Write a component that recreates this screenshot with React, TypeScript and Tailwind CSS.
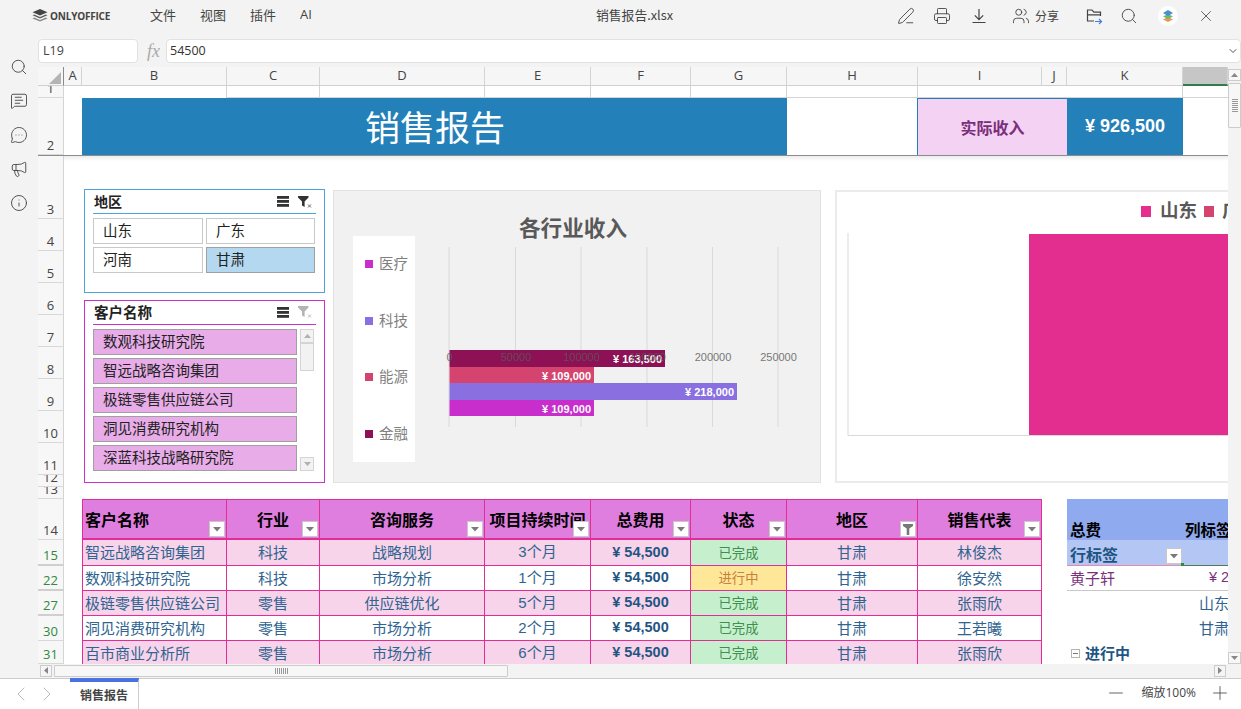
import React from "react";
import { Search, MessageSquareText, MessageCircleMore, Megaphone, Info, Printer, PenLine, Users, ChevronLeft, ChevronRight, ChevronDown, X, Minus, Plus } from "lucide-react";

const sans = "font-['Liberation_Sans','Noto_Sans_CJK_SC',sans-serif]";
const cjk = "font-['Noto_Sans_CJK_SC',sans-serif]";
const ui = "font-['Open_Sans','Noto_Sans_CJK_SC',sans-serif]";

const Caret = () => (
  <svg width="8" height="5" viewBox="0 0 8 5"><path d="M0 0h8L4 4.5z" fill="#7a7a7a" /></svg>
);

function FilterBtn({ funnel }: { funnel?: boolean }) {
  return (
    <span className="absolute right-[1px] bottom-[1px] w-[16px] h-[16px] bg-white border border-[#c8c8c8] flex items-center justify-center">
      {funnel ? (
        <svg width="10" height="11" viewBox="0 0 10 11"><path d="M0 0h10v2L6.3 4.5V11H3.7V4.5L0 2z" fill="#777777" /></svg>
      ) : (
        <Caret />
      )}
    </span>
  );
}

function RowHead({ n, green, thick }: { n: number | string; green?: boolean; thick?: boolean }) {
  return (
    <div
      className={
        "bg-[#f6f7f6] border-r border-r-[#d4d4d4] flex items-end justify-center overflow-hidden text-[13px] leading-[18px] " +
        ui +
        " " +
        (green ? "text-[#2f8a3a] " : "text-[#444444] ") +
        (thick ? "border-b-2 border-b-[#cfcfcf]" : "border-b border-b-[#d8d8d8]")
      }
    >
      {n}
    </div>
  );
}

function ColHead({ t, sel }: { t: string; sel?: boolean }) {
  return (
    <div
      className={
        "flex items-center justify-center text-[13px] text-[#444444] border-r border-r-[#d4d4d4] " +
        ui +
        " " +
        (sel ? "bg-[#c6c6c6] border-b-2 border-b-[#2f7d4a]" : "bg-[#f6f6f6] border-b border-b-[#d0d0d0]")
      }
    >
      {t}
    </div>
  );
}

const Grid1 = ({ span }: { span: string }) => <div className={span + " bg-white border-r border-r-[#d4d4d4] border-b border-b-[#d4d4d4]"} />;

const headBase =
  "relative bg-[#df7edf] border-t border-r border-b-2 border-[#e22d96] flex items-center text-[16px] font-bold text-black whitespace-nowrap overflow-hidden " + cjk;

function Head({ t, left, first, funnel }: { t: string; left?: boolean; first?: boolean; funnel?: boolean }) {
  return (
    <div className={headBase + (left ? " justify-start pl-[2px]" : " justify-center") + (first ? " border-l" : "")}>
      <span className="pb-[1px]">{t}</span>
      <FilterBtn funnel={funnel} />
    </div>
  );
}

const rows = [
  { n: 15, thick: true, c: ["智远战略咨询集团", "科技", "战略规划", "3个月", "已完成", "林俊杰"], pink: true, h: "h-[26px]", extra: "hang" },
  { n: 22, thick: true, c: ["数观科技研究院", "科技", "市场分析", "1个月", "进行中", "徐安然"], pink: false, h: "h-[25px]", extra: "p1" },
  { n: 27, thick: true, c: ["极链零售供应链公司", "零售", "供应链优化", "5个月", "已完成", "张雨欣"], pink: true, h: "h-[25px]", extra: "p2" },
  { n: 30, thick: false, c: ["洞见消费研究机构", "零售", "市场分析", "2个月", "已完成", "王若曦"], pink: false, h: "h-[25px]", extra: "p3" },
  { n: 31, thick: false, c: ["百市商业分析所", "零售", "市场分析", "6个月", "已完成", "张雨欣"], pink: true, h: "h-[25px]", extra: "p4" },
];

const bodyCell = "border-r border-b border-[#e22d96] flex items-center whitespace-nowrap overflow-hidden ";
const bodyText = "text-[15px] text-[#2f6490] ";

function PivotCells({ k }: { k: string }) {
  if (k === "hang")
    return (
      <>
        <div className={"relative bg-[#b4c6f4] border-b border-b-[#e58ab0] flex items-center pl-[3px] pt-[2px] text-[16px] font-bold text-[#1f5582] " + cjk}>
          行标签
          <FilterBtn />
        </div>
        <div className="relative bg-[#b4c6f4] border-b border-b-[#4c7a5c]">
          <span className="absolute left-[-2px] bottom-[-1px] w-[3px] h-[3px] bg-[#2f8a3a]" />
        </div>
      </>
    );
  if (k === "p1")
    return (
      <>
        <div className={"bg-white border-b border-b-[#c8c8c8] flex items-center pl-[3px] text-[15px] text-[#7a2f7a] " + cjk}>黄子轩</div>
        <div className={"bg-white border-b border-b-[#c8c8c8] flex items-center pl-[26px] text-[14.5px] text-[#7a2f7a] whitespace-nowrap overflow-hidden " + sans}>¥ 218,000</div>
      </>
    );
  if (k === "p2" || k === "p3")
    return (
      <>
        <div className="bg-white" />
        <div className={"bg-white flex items-center pl-[16px] text-[15px] text-[#2f6490] whitespace-nowrap overflow-hidden " + cjk}>{k === "p2" ? "山东" : "甘肃"}</div>
      </>
    );
  return (
    <>
      <div className={"bg-white flex items-center pl-[4px] gap-[5px] text-[15px] font-bold text-[#1f5582] h-[25px] " + cjk}>
        <span className="w-[9px] h-[9px] border border-[#b5b5b5] flex items-center justify-center">
          <span className="w-[5px] h-[1px] bg-[#777777]" />
        </span>
        进行中
      </div>
      <div className="bg-white" />
    </>
  );
}

function SlicerIcons({ dim }: { dim?: boolean }) {
  return (
    <div className="ml-auto mr-[4px] flex items-center gap-[9px]">
      <svg width="12" height="11" viewBox="0 0 12 11">
        <rect x="0" y="0" width="12" height="2.8" fill="#333" />
        <rect x="0" y="4" width="12" height="2.8" fill="#333" />
        <rect x="0" y="8" width="12" height="2.8" fill="#333" />
      </svg>
      <svg width="14" height="12" viewBox="0 0 14 12">
        <path d="M0 0h10.5v1.4L6.6 5.4V11l-2.6-1.6V5.4L0 1.4z" fill={dim ? "#b4b4b4" : "#333"} />
        <path d="M10 8.5l3 3m0-3l-3 3" stroke={dim ? "#b4b4b4" : "#555"} strokeWidth="0.9" />
      </svg>
    </div>
  );
}

function SliceBtn({ t, sel, pink }: { t: string; sel?: boolean; pink?: boolean }) {
  return (
    <div
      className={
        "h-[26px] flex items-center pl-[9px] pb-[2px] text-[14.5px] text-[#222222] whitespace-nowrap border " +
        (pink ? "bg-[#e8ace8] border-[#a0a0a0]" : sel ? "bg-[#b3d8f0] border-[#a0a0a0]" : "bg-white border-[#c8c8c8]")
      }
    >
      {t}
    </div>
  );
}

function Chart1() {
  const f = "font-['Liberation_Sans','Noto_Sans_CJK_SC',sans-serif]";
  const ticks = [
    [449, "0"],
    [515.5, "50000"],
    [581, "100000"],
    [647, "150000"],
    [712.5, "200000"],
    [778, "250000"],
  ] as const;
  const legend = [
    ["医疗", "#c72ecb", 264],
    ["科技", "#8a6fe0", 321],
    ["能源", "#d4446f", 377],
    ["金融", "#8e1155", 434],
  ] as const;
  const bars = [
    [350, 17, 665, "#8e1155", "¥ 163,500", 662],
    [367, 16, 594, "#d4446f", "¥ 109,000", 591],
    [383, 17, 737, "#8a6fe0", "¥ 218,000", 734],
    [400, 16, 594, "#c72ecb", "¥ 109,000", 591],
  ] as const;
  return (
    <svg className="block" width="486" height="291" viewBox="334 191 486 291">
      <text x="573" y="235.5" textAnchor="middle" fontSize="21.6" fontWeight="700" fill="#595959" className={cjk}>各行业收入</text>
      <rect x="353" y="236" width="62" height="226" fill="#ffffff" />
      {legend.map(([t, c, y]) => (
        <g key={t}>
          <rect x="365" y={y - 4} width="8" height="8" fill={c} />
          <text x="379" y={y + 5} fontSize="14.5" fill="#7f7f7f" className={cjk}>{t}</text>
        </g>
      ))}
      {ticks.map(([x]) => (
        <line key={x} x1={x} x2={x} y1="247" y2="427" stroke="#d9d9d9" strokeWidth="1" />
      ))}
      {bars.map(([y, h, x2, c, t, tx]) => (
        <g key={y}>
          <rect x="449.5" y={y} width={x2 - 449.5} height={h} fill={c} />
          <text x={tx} y={y + 12.5} textAnchor="end" fontSize="11" fontWeight="700" fill="#ffffff" className={f}>{t}</text>
        </g>
      ))}
      {ticks.map(([x, t]) => (
        <text key={t} x={x + 0.5} y="361" textAnchor="middle" fontSize="11" fill="#595959" opacity="0.8" className={f}>{t}</text>
      ))}
    </svg>
  );
}

function Chart2() {
  return (
    <svg className="block" width="420" height="291" viewBox="837 191 420 291">
      <rect x="1141" y="205" width="10" height="11" fill="#e62e8f" />
      <text x="1160" y="216" fontSize="18.5" fontWeight="700" fill="#595959" className={cjk}>山东</text>
      <rect x="1204" y="205" width="10" height="11" fill="#d4446f" />
      <text x="1222" y="216" fontSize="18.5" fontWeight="700" fill="#595959" className={cjk}>广东</text>
      <line x1="848" x2="848" y1="232" y2="434.5" stroke="#d9d9d9" />
      <line x1="848" x2="1257" y1="434.5" y2="434.5" stroke="#d9d9d9" />
      <rect x="1029" y="233" width="228" height="201" fill="#e32d8f" />
    </svg>
  );
}

const Logo = () => (
  <svg width="16" height="15" viewBox="0 0 16 15">
    <path d="M8 0l7.5 3.2L8 6.4.5 3.2z" fill="#444" />
    <path d="M2.2 5.4L8 7.9l5.8-2.5 1.7.8L8 9.4.5 6.2z" fill="#5c5c5c" />
    <path d="M2.2 8.6L8 11.1l5.8-2.5 1.7.8L8 12.6.5 9.4z" fill="#8a8a8a" />
  </svg>
);

export default function App() {
  const ic = { size: 18, strokeWidth: 1.2, color: "#444444" };
  return (
    <div className={"w-[1241px] h-[709px] bg-[#f3f3f3] overflow-hidden flex flex-col " + cjk}>
      {/* title bar */}
      <div className="h-[39px] shrink-0 relative flex items-start">
        <div className="flex items-center h-[33px] pl-[32px] w-[150px] gap-[2px]">
          <Logo />
          <span className="text-[10px] font-bold text-[#444444] tracking-[-0.2px] font-['Open_Sans',sans-serif]">ONLYOFFICE</span>
        </div>
        <div className="flex items-center h-[30px] text-[13px] text-[#444444]">
          <span className="w-[50px]">文件</span>
          <span className="w-[50px]">视图</span>
          <span className="w-[50px]">插件</span>
          <span className={ui}>AI</span>
        </div>
        <div className="absolute left-[596px] top-0 h-[30px] flex items-center text-[12.8px] text-[#444444]">销售报告.xlsx</div>
        <div className="ml-auto flex items-center h-[31px] pr-[26px]">
          <PenLine {...ic} />
          <Printer {...ic} className="ml-[18px]" />
          <svg className="ml-[19px]" width="18" height="18" viewBox="0 0 18 18" fill="none" stroke="#444444" strokeWidth="1.2">
            <path d="M9 2v10.5M4.8 8.4L9 12.6l4.2-4.2M2.5 15.5h13" />
          </svg>
          <Users {...ic} className="ml-[24px]" />
          <span className="ml-[5px] text-[12px] text-[#444444]">分享</span>
          <svg className="ml-[26px]" width="18" height="18" viewBox="0 0 18 18" fill="none" strokeWidth="1.2">
            <path d="M9 14H2.5V3h4.5l2 2.2h6.5V9M2.5 7.8h13" stroke="#444444" />
            <path d="M10 14.5h6.5M14 12l2.5 2.5L14 17" stroke="#3f7fe0" />
          </svg>
          <Search {...ic} className="ml-[17px]" />
          <span className="ml-[20px] w-[20px] h-[20px] rounded-full bg-white flex items-center justify-center">
            <svg width="12" height="12" viewBox="0 0 12 12">
              <path d="M6 7l5 2.4L6 12 1 9.4z" fill="#e59a52" />
              <path d="M6 4l5 2.4L6 9 1 6.4z" fill="#72b872" />
              <path d="M6 0l5 3L6 6 1 3z" fill="#4a8fd6" />
            </svg>
          </span>
          <X size={18} strokeWidth={1.1} color="#444444" className="ml-[19px]" />
        </div>
      </div>

      <div className="flex-1 flex min-h-0">
        {/* left rail */}
        <div className="w-[38px] shrink-0 flex flex-col items-center pt-[19px] gap-[16px]">
          <Search {...ic} />
          <MessageSquareText {...ic} />
          <MessageCircleMore {...ic} />
          <Megaphone {...ic} />
          <Info {...ic} />
        </div>

        <div className="w-[1203px] flex flex-col">
          {/* formula bar */}
          <div className="h-[24px] flex shrink-0 mb-[4px]">
            <div className={"w-[100px] bg-white rounded-[4px] border border-[#e2e2e2] flex items-center pl-[4px] text-[12.5px] text-[#444444] " + ui}>L19</div>
            <div className="w-[28px] flex items-center justify-center pl-[3px] font-['Liberation_Serif',serif] italic text-[18px] text-[#aaaaaa]">fx</div>
            <div className={"flex-1 bg-white rounded-[4px] border border-[#e2e2e2] flex items-center pl-[3px] text-[12.5px] text-[#333333] " + ui}>
              54500
              <ChevronDown size={12} strokeWidth={2} color="#555555" className="ml-auto mr-[1px]" />
            </div>
          </div>

          <div className="flex h-[610px]">
            <div className="w-[1190px] flex flex-col">
              {/* sheet */}
              <div className="relative h-[597px] bg-white overflow-hidden grid grid-cols-[26px_18px_145px_93px_165px_106px_100px_96px_131px_124px_25px_116px_45px] grid-rows-[19px_12px_57px_64px_32px_32px_32px_32px_32px_32px_32px_32px_12px_12px_41px_26px_25px_25px_25px_23px]">
                {/* column letters */}
                <div className="bg-[#f6f6f6] border-r border-r-[#8a8a8a] border-b border-b-[#d0d0d0] flex items-end justify-end">
                  <svg width="12" height="12" viewBox="0 0 12 12" className="mb-[1px] mr-[2px]"><path d="M12 0v12H0z" fill="#b4b4b4" /></svg>
                </div>
                {["A", "B", "C", "D", "E", "F", "G", "H", "I", "J", "K"].map((c) => (
                  <ColHead key={c} t={c} />
                ))}
                <ColHead t="" sel />

                {/* row 1 */}
                <RowHead n={1} />
                <div className="col-span-2 bg-white border-r border-r-[#d4d4d4]" />
                <Grid1 span="" />
                <Grid1 span="" />
                <Grid1 span="" />
                <Grid1 span="" />
                <Grid1 span="" />
                <Grid1 span="" />
                <Grid1 span="col-span-3" />
                <div className="bg-white border-b border-b-[#d4d4d4]" />

                {/* row 2 */}
                <RowHead n={2} />
                <div className="bg-white" />
                <div className="col-span-6 bg-[#2480b9] flex items-center justify-center text-[35px] text-white pb-[2px] leading-none">
                  <span className="pl-[1px]">销售报告</span>
                </div>
                <div className="bg-white" />
                <div className="col-span-2 -ml-[1px] bg-[#f4d2f4] border-t border-l border-[#2480b9] flex items-center justify-center text-[16px] font-bold text-[#7a2f7a]">实际收入</div>
                <div className={"bg-[#2480b9] flex items-center justify-center text-[18px] font-bold text-white " + sans}>¥ 926,500</div>
                <div className="bg-white" />

                {/* rows 3-13 */}
                {[3, 4, 5, 6, 7, 8, 9, 10, 11].map((n) => (
                  <React.Fragment key={n}>
                    <RowHead n={n} />
                    <div className="col-span-12 bg-white" />
                  </React.Fragment>
                ))}
                <RowHead n={12} />
                <div className="col-span-12 bg-white" />
                <RowHead n={13} />
                <div className="col-span-12 bg-white" />

                {/* row 14 */}
                <RowHead n={14} />
                <div className="bg-white" />
                <Head t="客户名称" left first />
                <Head t="行业" />
                <Head t="咨询服务" />
                <Head t="项目持续时间" />
                <Head t="总费用" />
                <Head t="状态" />
                <Head t="地区" funnel />
                <Head t="销售代表" />
                <div className="bg-white" />
                <div className={"bg-[#8faaee] flex items-end pl-[3px] pb-[1px] text-[15.5px] font-bold text-black leading-[20px] " + cjk}>总费</div>
                <div className={"bg-[#8faaee] flex items-end pl-[2px] pb-[1px] text-[15.5px] font-bold text-black whitespace-nowrap overflow-hidden leading-[20px] " + cjk}>列标签</div>

                {/* table body */}
                {rows.map((r) => {
                  const bg = r.pink ? "bg-[#f7d4ea] " : "bg-white ";
                  return (
                    <React.Fragment key={r.n}>
                      <RowHead n={r.n} green thick={r.thick} />
                      <div className="bg-white" />
                      <div className={bodyCell + bodyText + bg + "border-l pl-[2px] " + r.h}>{r.c[0]}</div>
                      <div className={bodyCell + bodyText + bg + "justify-center " + r.h}>{r.c[1]}</div>
                      <div className={bodyCell + bodyText + bg + "justify-center " + r.h}>{r.c[2]}</div>
                      <div className={bodyCell + bodyText + bg + "justify-center " + sans + " " + r.h}>{r.c[3]}</div>
                      <div className={bodyCell + bg + "justify-center font-bold text-[14.5px] text-[#1f5582] " + sans + " " + r.h}>¥ 54,500</div>
                      <div
                        className={
                          bodyCell +
                          "justify-center text-[13.3px] " +
                          (r.c[4] === "进行中" ? "bg-[#fee799] text-[#c9803a] " : "bg-[#c6efce] text-[#3f8f4f] ") +
                          r.h
                        }
                      >
                        {r.c[4]}
                      </div>
                      <div className={bodyCell + bodyText + bg + "justify-center " + r.h}>甘肃</div>
                      <div className={bodyCell + bodyText + bg + "justify-center " + r.h}>{r.c[5]}</div>
                      <div className="bg-white" />
                      <PivotCells k={r.extra} />
                    </React.Fragment>
                  );
                })}

                {/* frozen pane line */}
                <div className="absolute left-0 right-0 top-[88px] h-[1px] bg-[#8c8c8c]" />
                <div className="absolute left-[26px] right-0 top-[89px] h-[5px] bg-gradient-to-b from-[#ececec] to-transparent" />

                {/* slicer: region */}
                <div className="absolute left-[46px] top-[122px] w-[241px] h-[104px] bg-white border border-[#4ba5dc] px-[8px]">
                  <div className="h-[24px] flex items-center border-b border-b-[#4ba5dc] text-[14px] font-bold text-[#222222]">
                    <span className="pl-[1px]">地区</span>
                    <SlicerIcons />
                  </div>
                  <div className="grid grid-cols-[110px_109px] gap-x-[3px] gap-y-[3px] mt-[4px]">
                    <SliceBtn t="山东" />
                    <SliceBtn t="广东" />
                    <SliceBtn t="河南" />
                    <SliceBtn t="甘肃" sel />
                  </div>
                </div>

                {/* slicer: customer */}
                <div className="absolute left-[46px] top-[233px] w-[241px] h-[183px] bg-white border border-[#d12ed1] px-[8px]">
                  <div className="h-[24px] flex items-center pb-[1px] border-b border-b-[#d12ed1] text-[14.5px] font-bold text-[#222222]">
                    <span className="pl-[1px]">客户名称</span>
                    <SlicerIcons dim />
                  </div>
                  <div className="flex mt-[4px]">
                    <div className="w-[204px] flex flex-col gap-[3px]">
                      <SliceBtn t="数观科技研究院" pink />
                      <SliceBtn t="智远战略咨询集团" pink />
                      <SliceBtn t="极链零售供应链公司" pink />
                      <SliceBtn t="洞见消费研究机构" pink />
                      <SliceBtn t="深蓝科技战略研究院" pink />
                    </div>
                    <div className="ml-[3px] w-[14px] h-[142px] flex flex-col">
                      <div className="h-[14px] bg-[#f2f2f2] border border-[#d4d4d4] flex items-center justify-center">
                        <svg width="7" height="4" viewBox="0 0 7 4"><path d="M0 4h7L3.5 0z" fill="#b0b0b0" /></svg>
                      </div>
                      <div className="h-[28px] bg-[#f2f2f2] border border-[#d4d4d4]" />
                      <div className="mt-auto h-[14px] bg-[#f2f2f2] border border-[#d4d4d4] flex items-center justify-center">
                        <svg width="7" height="4" viewBox="0 0 7 4"><path d="M0 0h7L3.5 4z" fill="#b0b0b0" /></svg>
                      </div>
                    </div>
                  </div>
                </div>

                {/* chart: industry */}
                <div className="absolute left-[295px] top-[123px] w-[488px] h-[293px] bg-[#f1f1f1] border border-[#e2e2e2]">
                  <Chart1 />
                </div>

                {/* chart: region */}
                <div className="absolute left-[797px] top-[123px] w-[422px] h-[293px] bg-white border-2 border-[#ebebeb]">
                  <Chart2 />
                </div>
              </div>

              {/* horizontal scrollbar */}
              <div className="h-[13px] flex items-center pl-[2px] pr-[2px] bg-[#f3f3f3]">
                <div className="w-[12px] h-[12px] bg-[#f5f5f5] border border-[#cccccc] flex items-center justify-center">
                  <svg width="4" height="7" viewBox="0 0 4 7"><path d="M4 0v7L0 3.5z" fill="#888888" /></svg>
                </div>
                <div className="ml-[2px] w-[454px] h-[12px] bg-[#f7f7f7] border border-[#cccccc] rounded-[1px] flex items-center justify-center">
                  <span className="w-[13px] h-[6px] bg-[repeating-linear-gradient(90deg,#999999_0_1px,transparent_1px_2px)]" />
                </div>
                <div className="ml-auto w-[12px] h-[12px] bg-[#f5f5f5] border border-[#cccccc] flex items-center justify-center">
                  <svg width="4" height="7" viewBox="0 0 4 7"><path d="M0 0v7l4-3.5z" fill="#888888" /></svg>
                </div>
              </div>
            </div>

            {/* vertical scrollbar */}
            <div className="w-[13px] h-[597px] flex flex-col pt-[2px] bg-[#f3f3f3]">
              <div className="h-[12px] bg-[#f7f7f7] border border-[#cccccc] flex items-center justify-center">
                <svg width="7" height="4" viewBox="0 0 7 4"><path d="M0 4h7L3.5 0z" fill="#888888" /></svg>
              </div>
              <div className="mt-[2px] h-[45px] bg-[#f7f7f7] border border-[#cccccc] rounded-[1px] flex items-center justify-center">
                <span className="w-[6px] h-[13px] bg-[repeating-linear-gradient(0deg,#999999_0_1px,transparent_1px_2px)]" />
              </div>
              <div className="mt-auto h-[12px] bg-[#f7f7f7] border border-[#cccccc] flex items-center justify-center">
                <svg width="7" height="4" viewBox="0 0 7 4"><path d="M0 0h7L3.5 4z" fill="#888888" /></svg>
              </div>
            </div>
          </div>
        </div>
      </div>

      {/* status bar */}
      <div className="h-[31px] shrink-0 bg-white border-t border-t-[#cccccc] flex items-stretch">
        <div className="w-[70px] flex items-center pl-[9px] gap-[2px]">
          <ChevronLeft size={24} strokeWidth={0.8} color="#aaaaaa" />
          <ChevronRight size={24} strokeWidth={0.8} color="#aaaaaa" />
        </div>
        <div className="w-[69px] -mt-[1px] border-t-4 border-t-[#4a72e0] border-r border-r-[#cccccc] flex items-center justify-center text-[12px] font-semibold text-[#444444] pb-[2px]">销售报告</div>
        <div className="ml-auto flex items-center pb-[2px] text-[12px] text-[#444444]">
          <Minus size={22} strokeWidth={0.9} color="#444444" />
          <span className={"ml-[14px] " + ui}>缩放100%</span>
          <Plus size={22} strokeWidth={0.9} color="#444444" className="ml-[13px] mr-[10px]" />
        </div>
      </div>
    </div>
  );
}
